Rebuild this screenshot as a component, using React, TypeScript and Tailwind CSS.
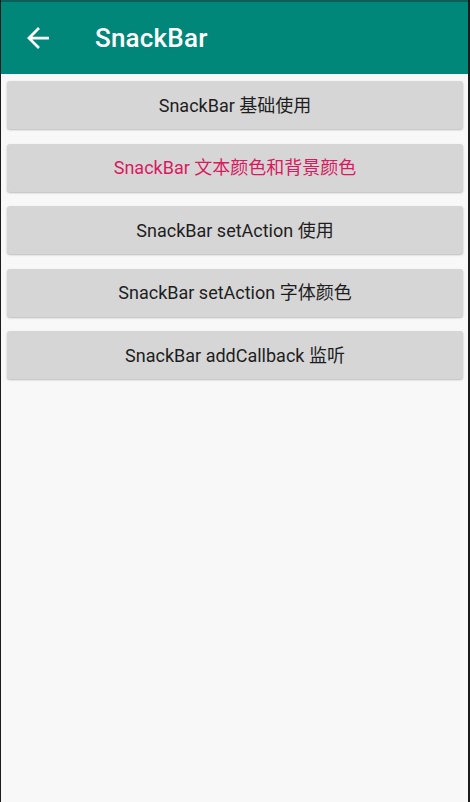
import React from 'react';

const items: { label: string; pink?: boolean }[] = [
  { label: 'SnackBar 基础使用' },
  { label: 'SnackBar 文本颜色和背景颜色', pink: true },
  { label: 'SnackBar setAction 使用' },
  { label: 'SnackBar setAction 字体颜色' },
  { label: 'SnackBar addCallback 监听' },
];

const App: React.FC = () => {
  return (
    <div
      className="w-[470px] h-[802px] bg-[#f8f8f8] border-l border-r-2 border-[#1c1c1c] flex flex-col overflow-hidden"
      style={{ fontFamily: 'Roboto, "Noto Sans CJK SC", sans-serif' }}
    >
      {/* Toolbar */}
      <div className="h-[74px] shrink-0 bg-[#00877a] border-t-2 border-[#0b5f56] flex items-center">
        <svg viewBox="4 4 16 16" className="ml-[26px] w-[22px] h-[22px] fill-white">
          <path d="M20 11H7.83l5.59-5.59L12 4l-8 8 8 8 1.41-1.41L7.83 13H20v-2z" />
        </svg>
        <span className="ml-[46px] text-white text-[26px] font-medium tracking-[0.2px]">SnackBar</span>
      </div>

      {/* Buttons */}
      <div className="flex flex-col gap-[14.5px] pt-[7px] pl-[6px] pr-[5px]">
        {items.map((item) => (
          <button
            key={item.label}
            className={`h-[48px] w-full rounded-[3px] bg-[#d6d6d6] shadow-[0_1px_2px_rgba(0,0,0,0.25)] text-[18px] font-normal ${
              item.pink ? 'text-[#d81b60]' : 'text-[#1e1e1e]'
            }`}
          >
            {item.label}
          </button>
        ))}
      </div>
    </div>
  );
};

export default App;
